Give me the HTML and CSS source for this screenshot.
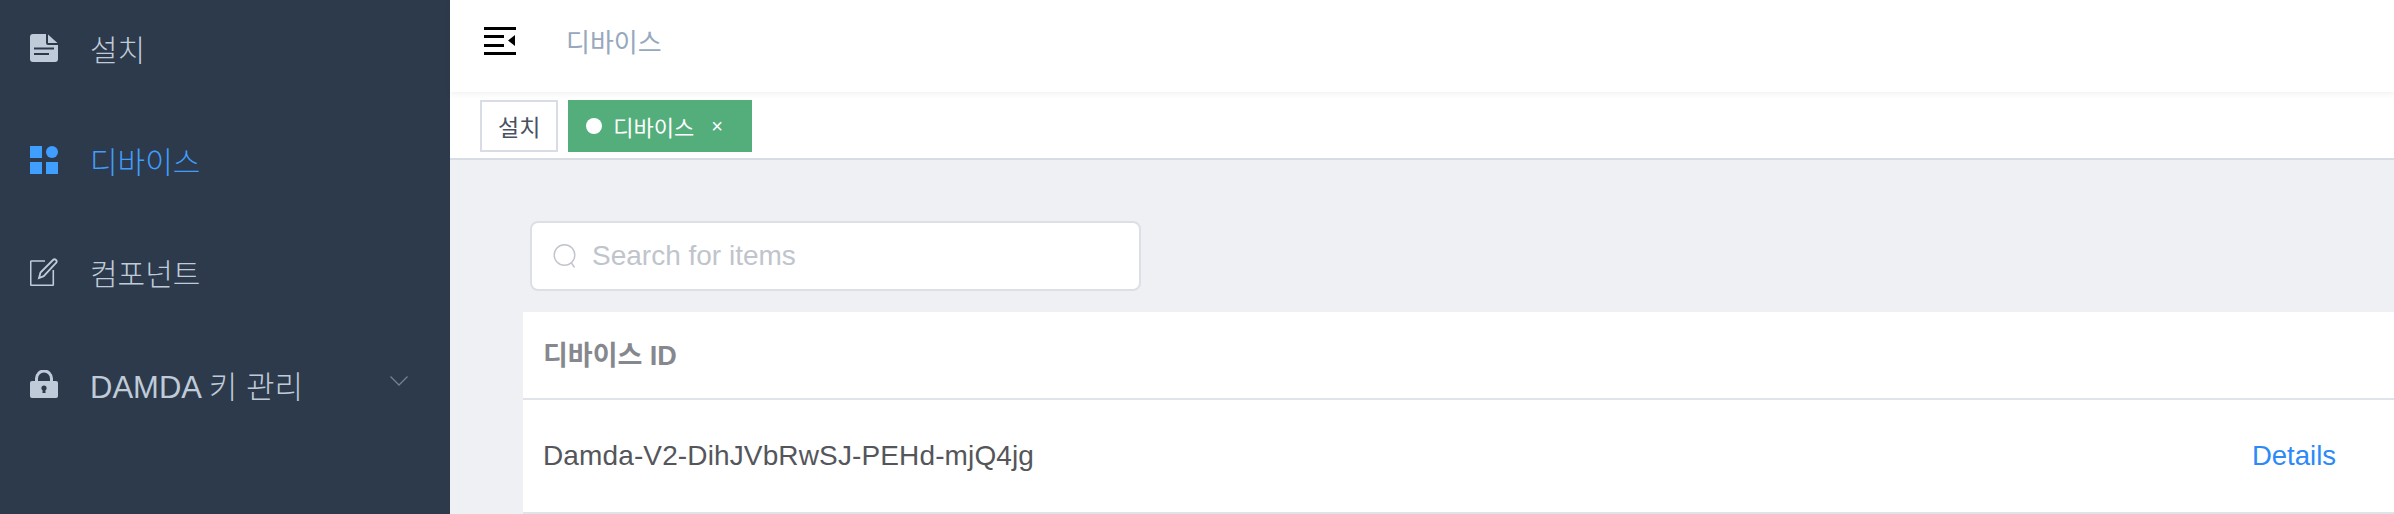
FILE: index.html
```html
<!DOCTYPE html>
<html lang="ko">
<head>
  <meta charset="UTF-8">
  <title>디바이스</title>
  <link rel="stylesheet" href="styles.css">
</head>
<body>

  <aside class="sidebar">
    <a class="side-item side-first">
      <svg class="side-icon" viewBox="0 0 28 28"><path fill="#bfcbd9" d="M3 0h13v9a2 2 0 0 0 2 2h10v14a3 3 0 0 1-3 3H3a3 3 0 0 1-3-3V3a3 3 0 0 1 3-3z"/><path fill="#bfcbd9" d="M18 0.5 27.5 9H18z"/><path fill="#2d3a4b" d="M4 13.5h20v2H4zM4 19h15v2H4z"/></svg>
      <span>설치</span>
    </a>
    <a class="side-item active">
      <svg class="side-icon" viewBox="0 0 28 28"><path fill="#409eff" d="M0 0h12v12H0zM0 16h12v12H0zM16 16h12v12H16z"/><circle fill="#409eff" cx="22" cy="6" r="6"/></svg>
      <span>디바이스</span>
    </a>
    <a class="side-item">
      <svg class="side-icon" viewBox="0 0 28 28"><path fill="none" stroke="#bfcbd9" stroke-width="1.6" d="M15 3H1.5a.8.8 0 0 0-.8.8v22.7a.8.8 0 0 0 .8.8h21a.8.8 0 0 0 .8-.8V12"/><path fill="none" stroke="#bfcbd9" stroke-width="1.8" d="M9 20l1.5-5.5L23 2c1-1 2-1 3 0s1 2 0 3L13.7 18.2z"/></svg>
      <span>컴포넌트</span>
    </a>
    <a class="side-item side-latin">
      <svg class="side-icon" viewBox="0 0 28 28"><path fill="none" stroke="#bfcbd9" stroke-width="3" d="M6.5 12V8.5a7.5 7.5 0 0 1 15 0V12"/><path fill="#bfcbd9" d="M2 11h24a2 2 0 0 1 2 2v13a2 2 0 0 1-2 2H2a2 2 0 0 1-2-2V13a2 2 0 0 1 2-2z"/><circle fill="#2d3a4b" cx="14" cy="18" r="2.6"/><path fill="#2d3a4b" d="M13 18h2l.6 5h-3.2z"/></svg>
      <span>DAMDA 키 관리</span>
      <svg class="side-arrow" viewBox="0 0 18 10"><path fill="none" stroke="#77808c" stroke-width="1.3" d="M0.5 0.5 9 9l8.5-8.5"/></svg>
    </a>
  </aside>

  <main class="main">
    <header class="navbar">
      <svg class="hamburger" viewBox="0 0 32 28"><path fill="#000" d="M0 0h32v3H0zM0 8h20v3H0zM0 17h20v3H0zM0 25h32v3H0zM31 8v11l-7-5.500z"/></svg>
      <span class="crumb">디바이스</span>
    </header>

    <div class="tags">
      <span class="tag">설치</span>
      <span class="tag tag-on"><i class="dot"></i>디바이스<b class="close">×</b></span>
    </div>

    <section class="content">
      <div class="search">
        <svg class="search-icon" viewBox="0 0 24 24"><circle fill="none" stroke="#c0c4cc" stroke-width="1.4" cx="11.500" cy="11" r="10.300"/><path fill="none" stroke="#c0c4cc" stroke-width="1.4" d="M18.500 19l3 4.500"/></svg>
        <input type="text" placeholder="Search for items">
      </div>

      <table class="devices">
        <thead>
          <tr><th>디바이스 ID</th><th></th></tr>
        </thead>
        <tbody>
          <tr><td>Damda-V2-DihJVbRwSJ-PEHd-mjQ4jg</td><td class="actions"><a>Details</a></td></tr>
        </tbody>
      </table>
    </section>
  </main>

</body>
</html>
```

FILE: styles.css
```css
html, body {
  margin: 0;
  height: 100%;
  overflow: hidden;
}

body {
  display: flex;
  font-family: "Liberation Sans", "Noto Sans CJK KR", sans-serif;
  background-color: #eef0f4;
}

.sidebar {
  width: 450px;
  flex: none;
  background-color: #2d3a4b;
  color: #bfcbd9;
  box-sizing: border-box;
}

.side-item {
  display: flex;
  align-items: center;
  height: 112px;
  padding-left: 30px;
  font-size: 30px;
  font-weight: 300;
}

.side-first {
  margin-top: -8px;
}

.side-latin {
  font-size: 31px;
}

.side-icon {
  width: 28px;
  height: 28px;
  flex: none;
  margin-right: 32px;
}

.side-item.active {
  color: #409eff;
}

.side-arrow {
  width: 18px;
  height: 10px;
  margin-left: auto;
  margin-right: 42px;
  margin-bottom: 6px;
}

.main {
  flex: 1;
  min-width: 0;
  display: flex;
  flex-direction: column;
}

.navbar {
  height: 92px;
  flex: none;
  background-color: #fff;
  box-shadow: 0 2px 6px rgba(0, 21, 41, 0.06);
  display: flex;
  align-items: center;
  padding-left: 34px;
  position: relative;
  box-sizing: border-box;
  padding-bottom: 10px;
}

.hamburger {
  width: 32px;
  height: 28px;
}

.crumb {
  margin-left: 50px;
  margin-bottom: 2px;
  font-size: 26px;
  color: #97a8be;
}

.tags {
  height: 64px;
  padding-top: 2px;
  flex: none;
  background-color: #fff;
  border-bottom: 2px solid #d8dce5;
  display: flex;
  align-items: center;
  gap: 10px;
  padding-left: 30px;
}

.tag {
  display: flex;
  align-items: center;
  height: 52px;
  box-sizing: border-box;
  padding: 0 16px;
  border: 2px solid #d8dce5;
  background-color: #fff;
  color: #495060;
  font-size: 23px;
}

.tag-on {
  background-color: #53ae7c;
  border-color: #53ae7c;
  color: #fff;
  font-size: 22px;
  width: 184px;
}

.dot {
  width: 16px;
  height: 16px;
  border-radius: 50%;
  background-color: #fff;
  margin-right: 11px;
}

.close {
  font-weight: 400;
  font-size: 20px;
  margin-left: 17px;
}

.content {
  flex: 1;
  padding: 61px 0 0 73px;
}

.search {
  display: flex;
  align-items: center;
  width: 611px;
  height: 70px;
  margin-left: 7px;
  box-sizing: border-box;
  border: 2px solid #dcdfe6;
  border-radius: 8px;
  background-color: #fff;
  padding-left: 21px;
}

.search-icon {
  width: 24px;
  height: 24px;
  flex: none;
  margin-right: 15px;
}

.search input {
  flex: 1;
  min-width: 0;
  border: none;
  outline: none;
  background: transparent;
  padding: 0;
  font-family: inherit;
  font-size: 28px;
}

.search input::placeholder {
  color: #c0c4cc;
  opacity: 1;
}

.devices {
  width: 100%;
  margin-top: 21px;
  border-collapse: collapse;
  background-color: #fff;
}

.devices th,
.devices td {
  border-bottom: 2px solid #dfe4ea;
  padding: 0 0 0 20px;
  text-align: left;
}

.devices th {
  height: 87px;
  padding-bottom: 4px;
  box-sizing: border-box;
  font-size: 27px;
  color: #85888e;
  font-weight: 700;
}

.devices td {
  height: 112px;
  font-size: 28px;
  letter-spacing: 0.13px;
  color: #54565b;
}

.devices .actions {
  text-align: right;
  padding-right: 58px;
  letter-spacing: 0;
  font-size: 27.500px;
}

.actions a {
  color: #2c89f7;
}
```
